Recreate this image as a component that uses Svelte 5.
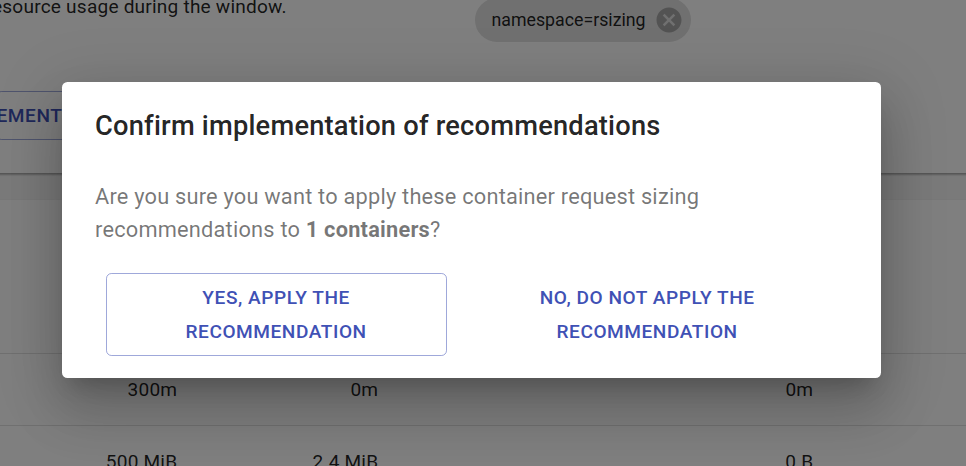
<script>
  const rows = [
    ['300m', '0m', '0m'],
    ['500 MiB', '2.4 MiB', '0 B'],
  ];
</script>

<div class="screen">
  <main>
    <section class="summary">
      <div class="left">
        <p>esource usage during the window.</p>
        <button class="implement">EMENT</button>
      </div>
      <div class="chip">
        <span>namespace=rsizing</span>
        <svg viewBox="0 0 24 24"><path d="M12 2C6.47 2 2 6.47 2 12s4.47 10 10 10 10-4.47 10-10S17.53 2 12 2zm5 13.59L15.59 17 12 13.41 8.41 17 7 15.59 10.59 12 7 8.41 8.41 7 12 10.59 15.59 7 17 8.41 13.41 12 17 15.59z" /></svg>
      </div>
    </section>
    <section class="table">
      <div class="table-head"></div>
      {#each rows as row}
        <div class="row">
          {#each row as cell}<span>{cell}</span>{/each}
        </div>
      {/each}
    </section>
  </main>
  <div class="backdrop">
    <div class="dialog" role="dialog" aria-modal="true" aria-labelledby="title">
      <h2 id="title">Confirm implementation of recommendations</h2>
      <p>Are you sure you want to apply these container request sizing<br />recommendations to <strong>1 containers</strong>?</p>
      <div class="actions">
        <button class="outlined">YES, APPLY THE<br />RECOMMENDATION</button>
        <button>NO, DO NOT APPLY THE<br />RECOMMENDATION</button>
      </div>
    </div>
  </div>
</div>

<style>
  .screen {
    position: relative;
    width: 966px;
    height: 466px;
    overflow: hidden;
    font-family: Roboto, "Liberation Sans", sans-serif;
    color: rgba(0, 0, 0, 0.87);
  }
  main {
    display: flex;
    flex-direction: column;
    gap: 26px;
    height: 466px;
    background: #f5f5f5;
    overflow: hidden;
  }
  button {
    font: 500 19.08px/34px Roboto, "Liberation Sans", sans-serif;
    letter-spacing: 0.02857em;
    color: #3f51b5;
    background: none;
    border: 1px solid transparent;
    border-radius: 5.5px;
    padding: 0;
    box-sizing: border-box;
  }
  .summary {
    flex: none;
    display: flex;
    height: 173px;
    margin: 0 -12px;
    padding: 0 12px;
    background: #fff;
    box-shadow:
      0 3px 1.4px -1.4px rgba(0, 0, 0, 0.2),
      0 1.4px 1.4px rgba(0, 0, 0, 0.14),
      0 1.4px 4px rgba(0, 0, 0, 0.12);
  }
  .left {
    width: 475px;
    display: flex;
    flex-direction: column;
    align-items: flex-start;
  }
  .left p {
    margin: -7px 0 0 -8px;
    height: 98px;
    font-size: 19.08px;
    line-height: 28px;
    letter-spacing: 0.01071em;
  }
  .implement {
    width: 120px;
    height: 49px;
    margin-left: -4.5px;
    text-align: left;
    border-color: rgba(63, 81, 181, 0.5);
  }
  .chip {
    display: flex;
    align-items: center;
    gap: 8px;
    box-sizing: border-box;
    width: 216px;
    height: 44px;
    margin-top: -2px;
    padding: 0 0 1px 16.5px;
    border-radius: 22px;
    background: #e0e0e0;
    font-size: 17.75px;
  }
  .chip svg {
    width: 30px;
    height: 30px;
    fill: rgba(0, 0, 0, 0.26);
  }
  .table {
    flex: none;
    background: #fff;
    border-top: 1px solid #f0f0f0;
  }
  .table-head {
    height: 153px;
    border-bottom: 1px solid #e0e0e0;
  }
  .row {
    display: grid;
    grid-template-columns: 177.3px 201px 435px;
    height: 71px;
    border-bottom: 1px solid #e0e0e0;
    font-size: 19.08px;
    line-height: 72px;
    letter-spacing: 0.01071em;
    text-align: right;
  }
  .backdrop {
    position: absolute;
    inset: 0;
    display: flex;
    align-items: flex-start;
    padding: 82px 0 0 62px;
    background: rgba(0, 0, 0, 0.5);
  }
  .dialog {
    box-sizing: border-box;
    width: 819px;
    height: 296px;
    padding: 22px 33px;
    border-radius: 5.5px;
    background: #fff;
    box-shadow:
      0 15px 20.6px -9.6px rgba(0, 0, 0, 0.2),
      0 33px 52px 4px rgba(0, 0, 0, 0.14),
      0 12px 63px 11px rgba(0, 0, 0, 0.12);
  }
  h2 {
    margin: 0;
    font-size: 27.27px;
    font-weight: 500;
    line-height: 44px;
    letter-spacing: 0.0075em;
  }
  .dialog p {
    margin: 32px 0 0;
    font-size: 21.8px;
    line-height: 33px;
    letter-spacing: 0.00938em;
    color: rgba(0, 0, 0, 0.54);
  }
  .actions {
    display: flex;
    gap: 30px;
    margin: 27px 0 0 11px;
  }
  .actions button {
    width: 341px;
    height: 83px;
    padding-right: 0.8px;
  }
  .actions .outlined {
    border-color: rgba(63, 81, 181, 0.5);
  }
</style>
